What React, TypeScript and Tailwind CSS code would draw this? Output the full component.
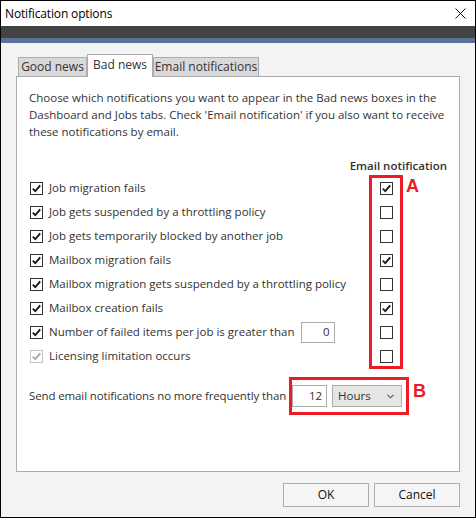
import { ReactNode } from 'react'

type Row = { label: ReactNode; on: boolean; email: boolean; disabled?: boolean }

const FONT = { fontFamily: '"Open Sans", "Noto Sans", sans-serif' }
const MARK = { fontFamily: '"Liberation Sans", Arial, sans-serif' }

function Check({ on, disabled }: { on: boolean; disabled?: boolean }) {
  return (
    <span
      className={`flex h-[13px] w-[13px] shrink-0 items-center justify-center border bg-white ${
        disabled ? 'border-[#c4c4c4]' : 'border-[#333333]'
      }`}
    >
      {on && (
        <svg width="11" height="11" viewBox="0 0 11 11">
          <path
            d="M1.8 5.6 L4.3 8.1 L9.2 2.4"
            fill="none"
            stroke={disabled ? '#a8a8a8' : '#1a1a1a'}
            strokeWidth="1.9"
          />
        </svg>
      )}
    </span>
  )
}

export default function App() {
  const rows: Row[] = [
    { label: 'Job migration fails', on: true, email: true },
    { label: 'Job gets suspended by a throttling policy', on: true, email: false },
    { label: 'Job gets temporarily blocked by another job', on: true, email: false },
    { label: 'Mailbox migration fails', on: true, email: true },
    { label: 'Mailbox migration gets suspended by a throttling policy', on: true, email: false },
    { label: 'Mailbox creation fails', on: true, email: true },
    {
      label: (
        <>
          <span className="whitespace-nowrap">Number of failed items per job is greater than</span>
          <span className="ml-[7px] flex h-[21px] w-[34px] items-center justify-end border border-[#acacac] bg-white pr-[5px]">
            0
          </span>
        </>
      ),
      on: true,
      email: false,
    },
    { label: 'Licensing limitation occurs', on: true, email: false, disabled: true },
  ]

  return (
    <div
      className="flex h-[518px] w-[476px] flex-col border border-black bg-[#f3f3f3] text-[11.5px] text-[#333333]"
      style={FONT}
    >
      {/* title bar */}
      <div className="flex h-[25px] shrink-0 items-center justify-between bg-white pl-[4px] pr-[9px] text-[12px] text-[#000000]">
        <span className="tracking-[-0.15px]">Notification options</span>
        <svg width="11" height="11" viewBox="0 0 11 11">
          <path d="M0.5 0.5 L10.5 10.5 M10.5 0.5 L0.5 10.5" stroke="#111" strokeWidth="1" />
        </svg>
      </div>
      <div className="h-[12px] shrink-0 bg-[#434343]" />
      <div className="h-[5px] shrink-0 bg-[#5a7199]" />

      <div className="flex flex-1 flex-col px-[15px] pt-[11px]">
        {/* tabs */}
        <div className="flex h-[22px] items-end pl-[2px] text-[12px]">
          <div className="flex h-[19px] w-[69px] items-center justify-center border border-b-0 border-[#acacac] bg-[#d9d9d9]">
            Good news
          </div>
          <div className="relative z-10 -mb-px flex h-[23px] w-[66px] items-start justify-center border border-b-0 border-[#acacac] bg-white pt-[1px]">
            Bad news
          </div>
          <div className="flex h-[19px] w-[106px] items-center justify-center border border-b-0 border-[#acacac] bg-[#d9d9d9]">
            Email notifications
          </div>
        </div>

        {/* panel */}
        <div className="flex h-[396px] flex-col border border-[#acacac] bg-white pl-[12px] pr-[12px] pt-[12px]">
          <p className="whitespace-nowrap leading-[17px]">
            Choose which notifications you want to appear in the Bad news boxes in the
            <br />
            Dashboard and Jobs tabs. Check 'Email notification' if you also want to receive
            <br />
            these notifications by email.
          </p>

          <div className="mt-[18px] text-right font-semibold leading-[16px]">Email notification</div>

          <div className="mt-[2px] flex">
            <div className="flex flex-1 flex-col">
              {rows.map((r, i) => (
                <div key={i} className="flex h-[24px] items-center pl-[1px]">
                  <Check on={r.on} disabled={r.disabled} />
                  <span className="ml-[6px] flex items-center whitespace-nowrap">{r.label}</span>
                </div>
              ))}
            </div>
            <div className="relative flex w-[34px] flex-col">
              {rows.map((r, i) => (
                <div key={i} className="flex h-[24px] items-center justify-center pl-[1px]">
                  <Check on={r.email} />
                </div>
              ))}
              <div className="pointer-events-none absolute -bottom-px -top-px left-0 right-0 border-[3px] border-[#ec1c24]" />
            </div>
            <div className="w-[44px] pl-[3px] pt-[1px] text-[18px] font-bold leading-[18px] text-[#ec1c24]" style={MARK}>
              A
            </div>
          </div>

          <div className="mt-[9px] flex items-center">
            <span className="whitespace-nowrap tracking-[-0.12px]">Send email notifications no more frequently than</span>
            <div className="ml-[3px] flex items-center border-[3px] border-[#ec1c24] py-[5px] pr-[4px]">
              <span className="flex h-[22px] w-[35px] items-center justify-end border border-[#acacac] bg-white pr-[4px]">
                12
              </span>
              <span className="ml-[5px] flex h-[22px] w-[70px] items-center justify-between border border-[#acacac] bg-[#e5e5e5] pl-[5px] pr-[7px]">
                Hours
                <svg width="7" height="5" viewBox="0 0 7 5">
                  <path d="M0.5 0.8 L3.5 3.8 L6.5 0.8" fill="none" stroke="#555" strokeWidth="1.1" />
                </svg>
              </span>
            </div>
            <span className="ml-[4px] self-start pt-[5px] text-[18px] font-bold leading-[18px] text-[#ec1c24]" style={MARK}>
              B
            </span>
          </div>
        </div>

        {/* buttons */}
        <div className="mt-[11px] flex justify-end gap-[5px] text-[12px]">
          <button className="h-[24px] w-[86px] border border-[#adadad] bg-[#f5f5f5] text-[#111]">OK</button>
          <button className="h-[24px] w-[86px] border border-[#adadad] bg-[#f5f5f5] text-[#111]">Cancel</button>
        </div>
      </div>
    </div>
  )
}
